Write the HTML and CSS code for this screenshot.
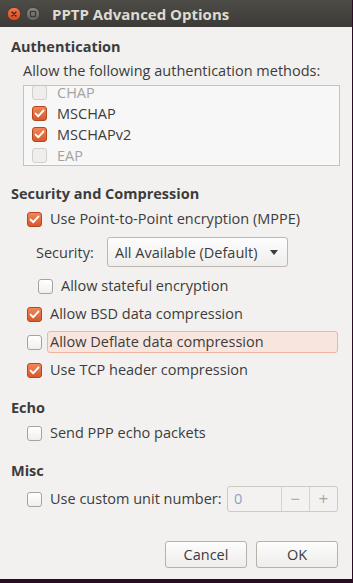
FILE: index.html
```html
<!DOCTYPE html>
<html>
<head>
<meta charset="utf-8">
<link rel="stylesheet" href="styles.css">
</head>
<body>
<div class="window">
  <div class="titlebar">
    <svg class="wbtn" width="14" height="14" viewBox="0 0 14 14">
      <defs><linearGradient id="cg" x1="0" y1="0" x2="0" y2="1"><stop offset="0" stop-color="#f47a4c"/><stop offset="1" stop-color="#d9461a"/></linearGradient></defs>
      <circle cx="7" cy="7" r="6.6" fill="url(#cg)" stroke="#3a2a22" stroke-width="0.6"/>
      <path d="M5 5 L9 9 M9 5 L5 9" stroke="#3b2a20" stroke-width="1.4" stroke-linecap="round"/>
    </svg>
    <svg class="wbtn" width="14" height="14" viewBox="0 0 14 14">
      <defs><linearGradient id="mg" x1="0" y1="0" x2="0" y2="1"><stop offset="0" stop-color="#8a8782"/><stop offset="1" stop-color="#64625d"/></linearGradient></defs>
      <circle cx="7" cy="7" r="6.6" fill="url(#mg)" stroke="#2f2e2b" stroke-width="0.6"/>
      <rect x="4.5" y="4.5" width="5" height="5" fill="none" stroke="#3a3935" stroke-width="1.2"/>
    </svg>
    <span class="title">PPTP Advanced Options</span>
  </div>
  <div class="content">
    <div class="heading">Authentication</div>
    <div class="label auth-label">Allow the following authentication methods:</div>
    <div class="listbox">
      <div class="rows">
        <div class="lrow disabled"><span class="cb cb-dis"></span><span>CHAP</span></div>
        <div class="lrow"><span class="cb cb-on"><svg viewBox="0 0 15 15" width="15" height="15"><path d="M3.6 7.6 L6.3 10.2 L11.4 4.6" fill="none" stroke="#fff" stroke-width="2" stroke-linecap="round" stroke-linejoin="round"/></svg></span><span>MSCHAP</span></div>
        <div class="lrow"><span class="cb cb-on"><svg viewBox="0 0 15 15" width="15" height="15"><path d="M3.6 7.6 L6.3 10.2 L11.4 4.6" fill="none" stroke="#fff" stroke-width="2" stroke-linecap="round" stroke-linejoin="round"/></svg></span><span>MSCHAPv2</span></div>
        <div class="lrow disabled"><span class="cb cb-dis"></span><span>EAP</span></div>
      </div>
    </div>

    <div class="heading sec-heading">Security and Compression</div>
    <div class="opt opt-mppe"><span class="cb cb-on"><svg viewBox="0 0 15 15" width="15" height="15"><path d="M3.6 7.6 L6.3 10.2 L11.4 4.6" fill="none" stroke="#fff" stroke-width="2" stroke-linecap="round" stroke-linejoin="round"/></svg></span><span class="otext">Use Point-to-Point encryption (MPPE)</span></div>
    <div class="secrow">
      <span class="seclabel">Security:</span>
      <div class="combo"><span>All Available (Default)</span><span class="arrow"></span></div>
    </div>
    <div class="opt opt-stateful"><span class="cb"></span><span class="otext">Allow stateful encryption</span></div>
    <div class="opt opt-bsd"><span class="cb cb-on"><svg viewBox="0 0 15 15" width="15" height="15"><path d="M3.6 7.6 L6.3 10.2 L11.4 4.6" fill="none" stroke="#fff" stroke-width="2" stroke-linecap="round" stroke-linejoin="round"/></svg></span><span class="otext">Allow BSD data compression</span></div>
    <div class="opt opt-next"><span class="cb"></span><span class="otext hl">Allow Deflate data compression</span></div>
    <div class="opt opt-next"><span class="cb cb-on"><svg viewBox="0 0 15 15" width="15" height="15"><path d="M3.6 7.6 L6.3 10.2 L11.4 4.6" fill="none" stroke="#fff" stroke-width="2" stroke-linecap="round" stroke-linejoin="round"/></svg></span><span class="otext">Use TCP header compression</span></div>

    <div class="heading echo-heading">Echo</div>
    <div class="opt opt-first"><span class="cb"></span><span class="otext">Send PPP echo packets</span></div>

    <div class="heading misc-heading">Misc</div>
    <div class="opt opt-unit"><span class="cb"></span><span class="otext">Use custom unit number:</span>
      <div class="spin"><span class="spin-entry">0</span><span class="spin-btn">−</span><span class="spin-btn">+</span></div>
    </div>

    <div class="buttons">
      <button class="btn">Cancel</button>
      <button class="btn">OK</button>
    </div>
  </div>
</div>
</body>
</html>
```

FILE: styles.css
```css
html, body {
  margin: 0;
  padding: 0;
}
body {
  background: #2c0c24;
  width: 353px;
  height: 583px;
  overflow: hidden;
  font-family: "Open Sans", "Noto Sans", sans-serif;
  font-size: 14.5px;
  color: #3c3c3c;
}
.window {
  width: 352px;
  height: 579px;
  background: #f2f1f0;
  display: flex;
  flex-direction: column;
}
.titlebar {
  height: 27px;
  background: linear-gradient(#4d4c47, #3c3b37);
  display: flex;
  align-items: center;
  padding-left: 7px;
  box-sizing: border-box;
}
.wbtn {
  margin-right: 5px;
  flex: none;
}
.title {
  margin-left: 7px;
  font-weight: bold;
  font-size: 15px;
  color: #dfdbd2;
  line-height: 20px;
}
.content {
  padding: 10px 14px 0 11px;
  display: flex;
  flex-direction: column;
  flex: 1;
}
.heading {
  font-weight: bold;
  line-height: 20px;
  height: 20px;
}
.label {
  line-height: 20px;
  height: 20px;
  white-space: nowrap;
}
.auth-label {
  margin-top: 4px;
  margin-left: 12px;
}
.listbox {
  margin-top: 4px;
  margin-left: 12px;
  width: 317px;
  height: 81px;
  box-sizing: border-box;
  border: 1px solid #c6c2bc;
  background: #f7f7f7;
  overflow: hidden;
}
.rows {
  margin-top: -4px;
}
.lrow {
  height: 21px;
  display: flex;
  align-items: center;
  padding-left: 8px;
  color: #3c3c3c;
}
.lrow .cb {
  margin-right: 10px;
}
.lrow.disabled {
  color: #a5a39f;
}
.cb {
  width: 15px;
  height: 15px;
  box-sizing: border-box;
  border: 1px solid #a7a39c;
  border-radius: 3px;
  background: linear-gradient(#ffffff, #f0efee);
  flex: none;
  position: relative;
}
.cb svg {
  position: absolute;
  left: -1px;
  top: -1px;
}
.cb-on {
  border-color: #b4471d;
  background: linear-gradient(#f28658, #d55a2c);
}
.cb-dis {
  border-color: #d3d0cb;
  background: #efeeec;
}
.sec-heading {
  margin-top: 18px;
}
.opt {
  display: flex;
  align-items: center;
  height: 22px;
  margin-left: 16px;
  white-space: nowrap;
}
.otext {
  margin-left: 5px;
  padding: 0 2px;
  line-height: 20px;
  border: 1px solid transparent;
  border-radius: 3px;
}
.hl {
  background: #f8e5de;
  border-color: #f1b59f;
  width: 285px;
}
.opt-mppe {
  margin-top: 4px;
}
.secrow {
  display: flex;
  align-items: center;
  margin-top: 7px;
  margin-left: 25px;
  height: 30px;
}
.seclabel {
  width: 71px;
}
.combo {
  width: 181px;
  height: 30px;
  box-sizing: border-box;
  border: 1px solid #bcb8b1;
  border-radius: 3px;
  background: linear-gradient(#fdfdfd, #efeeed);
  display: flex;
  align-items: center;
  justify-content: space-between;
  padding: 0 9px 0 7px;
  white-space: nowrap;
}
.arrow {
  width: 0;
  height: 0;
  border-left: 4px solid transparent;
  border-right: 4px solid transparent;
  border-top: 5px solid #3c3c3c;
}
.opt-stateful {
  margin-left: 27px;
  margin-top: 8px;
}
.opt-bsd {
  margin-top: 6px;
}
.opt-next {
  margin-top: 6px;
}
.echo-heading {
  margin-top: 17px;
}
.opt-first {
  margin-top: 4px;
}
.misc-heading {
  margin-top: 17px;
}
.opt-unit {
  margin-top: 5px;
  height: 26px;
}
.spin {
  margin-left: auto;
  width: 111px;
  height: 26px;
  box-sizing: border-box;
  border: 1px solid #cdc9c3;
  border-radius: 3px;
  background: #f3f2f1;
  display: flex;
  flex: none;
}
.spin-entry {
  width: 54px;
  padding-left: 6px;
  box-sizing: border-box;
  line-height: 24px;
  color: #8aa2c4;
}
.spin-btn {
  width: 28px;
  border-left: 1px solid #d6d3ce;
  text-align: center;
  line-height: 24px;
  color: #a9a6a1;
  font-size: 17px;
}
.buttons {
  margin-top: auto;
  margin-bottom: 11px;
  display: flex;
  justify-content: flex-end;
  gap: 9px;
}
.btn {
  width: 82px;
  height: 27px;
  box-sizing: border-box;
  border: 1px solid #b6b1a9;
  border-radius: 3px;
  background: linear-gradient(#fdfdfd, #eeedeb);
  font-family: "Open Sans", "Noto Sans", sans-serif;
  font-size: 14.5px;
  color: #3c3c3c;
  padding: 0;
}
```
